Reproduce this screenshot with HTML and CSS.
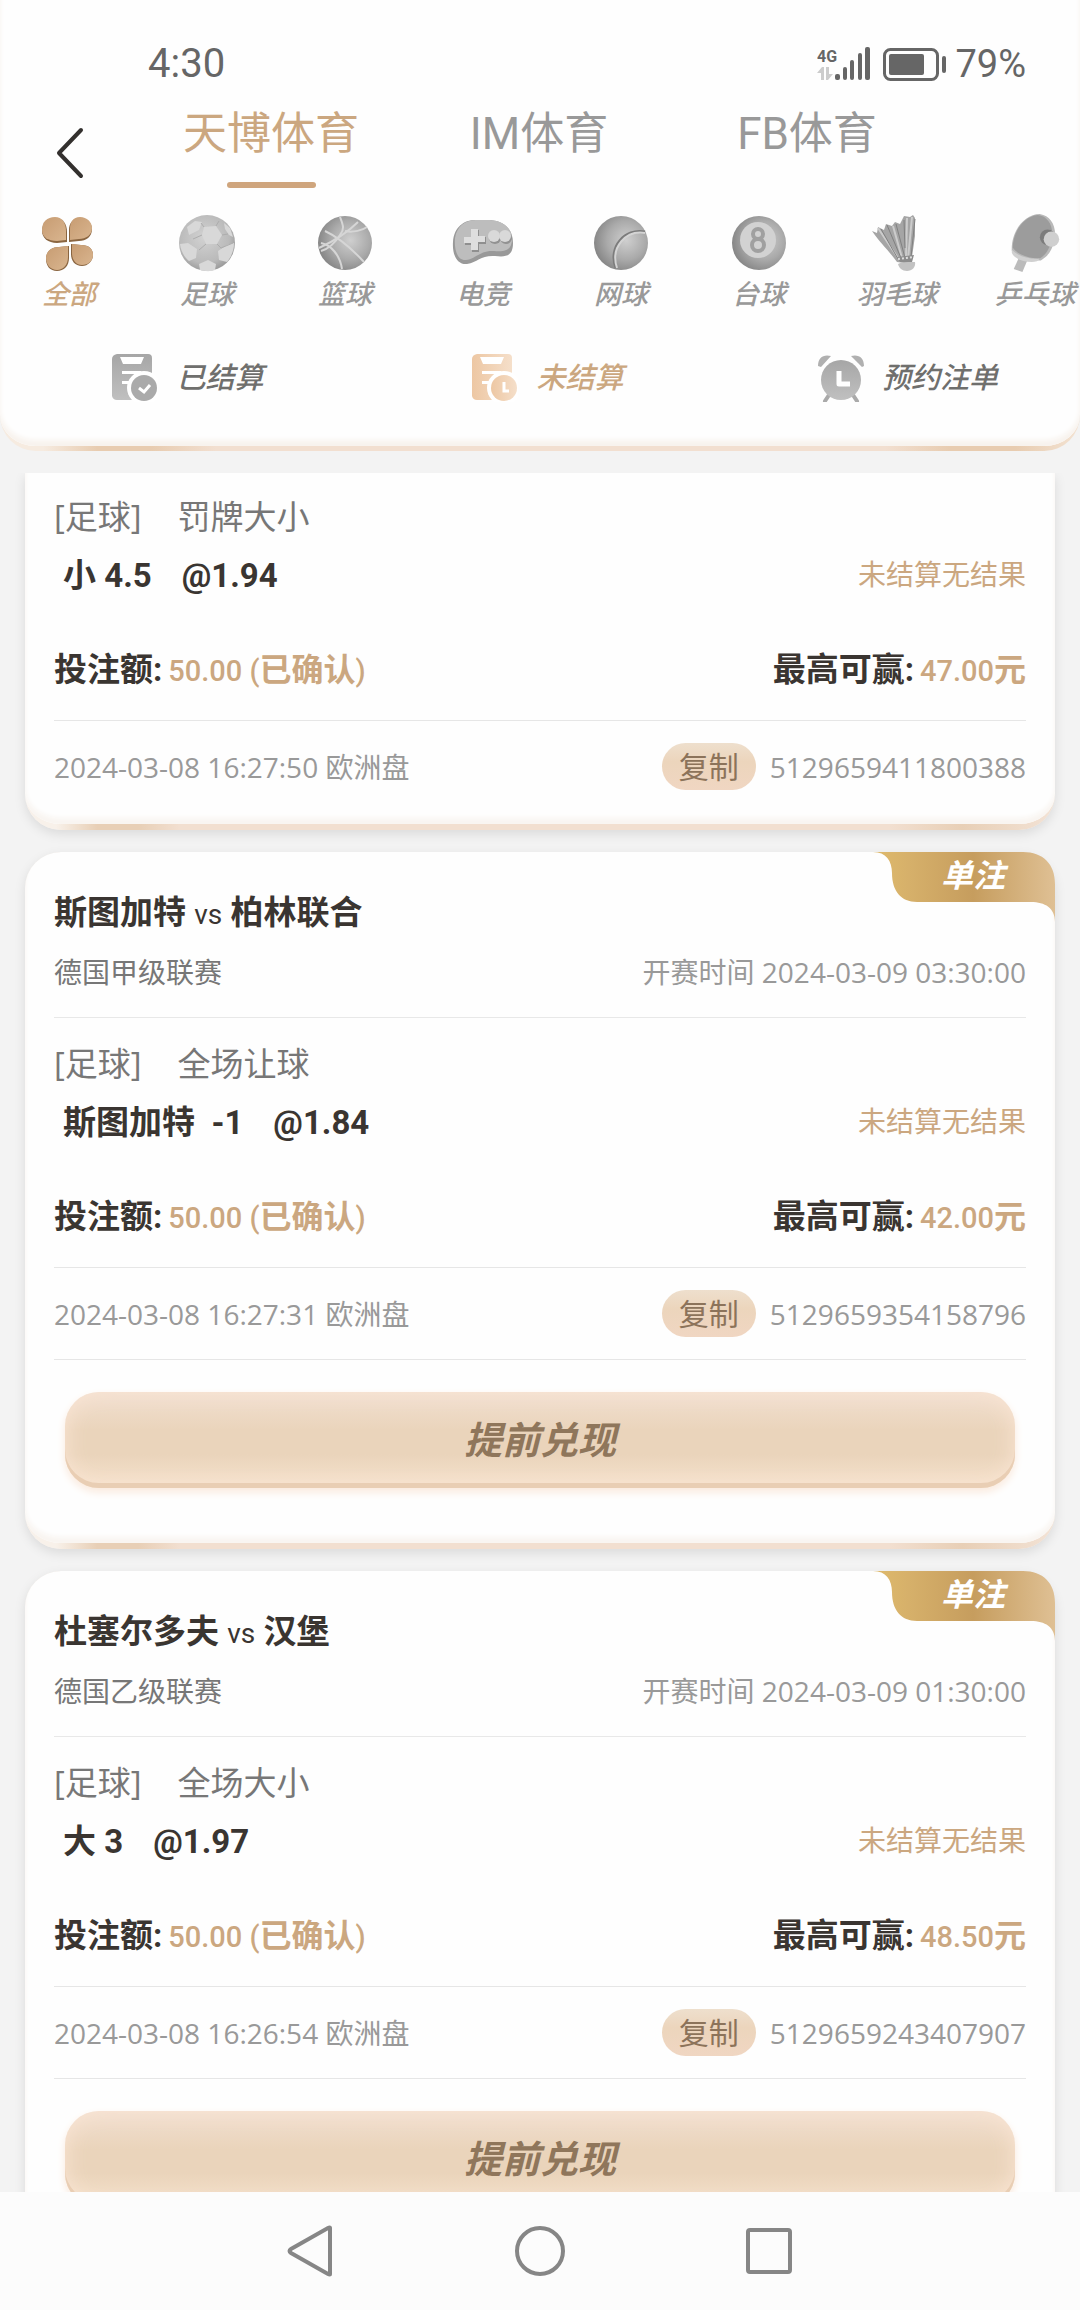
FILE: index.html
```html
<!DOCTYPE html>
<html lang="zh-CN">

<head>
    <meta charset="UTF-8">
    <meta name="viewport" content="width=device-width, initial-scale=1">
    <title>注单记录</title>
    <link rel="stylesheet" href="styles.css">
</head>

<body>
    <!-- shared gradients -->
    <svg class="defs" width="0" height="0" aria-hidden="true">
        <defs>
            <radialGradient id="ball" cx="0.6" cy="0.45" r="0.6">
                <stop offset="0" stop-color="#cfcfcf" />
                <stop offset="0.6" stop-color="#aaaaaa" />
                <stop offset="1" stop-color="#878787" />
            </radialGradient>
            <radialGradient id="ballLight" cx="0.45" cy="0.4" r="0.6">
                <stop offset="0" stop-color="#d2d2d2" />
                <stop offset="0.75" stop-color="#bababa" />
                <stop offset="1" stop-color="#9c9c9c" />
            </radialGradient>
            <linearGradient id="gold" x1="0" y1="0" x2="1" y2="1">
                <stop offset="0" stop-color="#c79c72" />
                <stop offset="1" stop-color="#d9b58f" />
            </linearGradient>
            <linearGradient id="goldLight" x1="0" y1="0" x2="1" y2="0">
                <stop offset="0" stop-color="#edc7a3" />
                <stop offset="1" stop-color="#f5dfca" />
            </linearGradient>
            <linearGradient id="silver" x1="0" y1="0" x2="0" y2="1">
                <stop offset="0" stop-color="#a6a6a6" />
                <stop offset="1" stop-color="#c0c0c0" />
            </linearGradient>
            <linearGradient id="badge" x1="0" y1="0" x2="1" y2="0">
                <stop offset="0" stop-color="#dfba6c" />
                <stop offset="0.2" stop-color="#d6b06a" />
                <stop offset="0.55" stop-color="#c69d5e" />
                <stop offset="1" stop-color="#dfc094" />
            </linearGradient>
        </defs>
    </svg>

    <header class="top-panel">
        <div class="status-bar">
            <span class="clock">4:30</span>
            <div class="status-right">
                <svg width="130" height="34" viewBox="0 0 130 34" aria-hidden="true">
                    <text class="net-type" x="0" y="15">4G</text>
                    <g fill="#cccccc">
                        <path d="M0 26L5 20h2v13H4v-7zM9 20h3v7h4l-5 6H9z" />
                    </g>
                    <g fill="#666666">
                        <rect x="18" y="27" width="5" height="6" rx="2" />
                        <rect x="26" y="20" width="4" height="13" rx="2" />
                        <rect x="33" y="13" width="4" height="20" rx="2" />
                        <rect x="41" y="6" width="4" height="27" rx="2" />
                        <rect x="48" y="0" width="5" height="33" rx="2" />
                        <rect x="72" y="7" width="35" height="21" rx="2" />
                        <rect x="125" y="9" width="4" height="17" rx="2" />
                    </g>
                    <rect x="67.500" y="2.500" width="53" height="30" rx="6" fill="none" stroke="#666666" stroke-width="3" />
                </svg>
                <span class="battery-level">79%</span>
            </div>
        </div>

        <div class="title-bar">
            <button class="back" type="button" aria-label="返回">
                <svg width="28" height="52" viewBox="0 0 28 52"><path d="M25 3L3 26l22 23" fill="none" stroke="#33302e" stroke-width="4" stroke-linecap="round" stroke-linejoin="round" /></svg>
            </button>
            <nav class="venue-tabs">
                <a href="#" class="active">天博体育</a>
                <a href="#">IM体育</a>
                <a href="#">FB体育</a>
            </nav>
        </div>

        <nav class="sports">
            <a href="#" class="active">
                <svg viewBox="0 0 62 58">
                    <g fill="#8a6540" transform="translate(0 1)">
                        <path d="M17 3c8 0 12 6 12 14v10l-10 1C10 28 4 23 4 16 4 8 9 3 17 3z" />
                        <path d="M42 3c7 0 12 5 12 11 0 8-6 12-13 12l-10 1V15C31 8 35 3 42 3z" />
                        <path d="M31 31v12c0 8-5 13-12 13S8 51 8 44c0-8 6-12 13-12z" />
                        <path d="M33 29l10 1c8 0 12 4 12 10s-5 11-11 11c-7 0-11-5-11-12z" />
                    </g>
                    <g fill="url(#gold)">
                        <path d="M17 3c7 0 11 6 11 14v9l-9 1C10 27 4 23 4 16 4 8 9 3 17 3z" />
                        <path d="M42 3c7 0 12 5 12 11 0 7-6 11-13 11l-9 1V15C32 8 35 3 42 3z" />
                        <path d="M30 32v11c0 8-5 13-11 13S8 51 8 44c0-7 6-11 13-11z" />
                        <path d="M34 30l9 1c8 0 12 4 12 10s-5 10-11 10-10-5-10-12z" />
                    </g>
                </svg>
                <span>全部</span>
            </a>
            <a href="#">
                <svg viewBox="0 0 62 58">
                    <circle cx="31" cy="29" r="28" fill="url(#ballLight)" />
                    <g fill="#d8d8d8">
                        <path d="M28 13l12-1 6 9-5 9H30l-4-9z" />
                        <path d="M11 13l8-6 7 1-3 8-10 5z" />
                        <path d="M4 30l8-1 9 6-1 9-7 3c-5-4-8-10-9-17z" />
                        <path d="M42 37l9-6 7-2c0 8-3 14-7 19l-8-2z" />
                        <path d="M23 50l9-4 8 4-1 6c-5 2-12 1-15 0z" />
                        <path d="M48 9l6 5 3 9-4-2-4-6z" />
                    </g>
                    <path d="M41 30l4 4 12-5M26 21l-9 4M46 21l6-1M30 30l-7 6M40 12l3-5M28 13l-3-4" fill="none" stroke="#adadad" />
                </svg>
                <span>足球</span>
            </a>
            <a href="#">
                <svg viewBox="0 0 62 58">
                    <circle cx="31" cy="29" r="27" fill="url(#ball)" />
                    <g fill="none" stroke="#d6d6d6" stroke-width="2">
                        <path d="M44 8C32 20 18 28 5 34" />
                        <path d="M11 17c13 6 28 19 39 31" />
                        <path d="M26 3c3 8 5 12 0 18-5 8-12 14-19 16" />
                        <path d="M7 29c10 2 19 12 21 26M31 17c8 2 18-1 22-4" />
                    </g>
                </svg>
                <span>篮球</span>
            </a>
            <a href="#">
                <svg viewBox="0 0 62 58">
                    <path d="M1 28C2 12 13 5 26 6h12c14 1 23 9 23 23 0 14-8 14-18 13-14-1-17 6-28 8C6 51 0 42 1 28z" fill="#999999" />
                    <path d="M3 24C5 11 15 5 26 6h12c13 1 22 8 22 19 0 12-8 13-18 12-14-1-18 8-28 9C5 47 2 35 3 24z" fill="#bdbdbd" />
                    <path d="M20 16h7v7h7v7h-7v8h-7v-7h-7v-7h7z" fill="#8f8f8f" />
                    <path d="M19 15h7v7h7v6h-7v8h-7v-7h-7v-6h7z" fill="#dedede" />
                    <circle cx="43" cy="24" r="6" fill="#929292" />
                    <circle cx="42" cy="22" r="6" fill="#d9d9d9" />
                    <circle cx="54" cy="24" r="6" fill="#929292" />
                    <circle cx="53" cy="22" r="6" fill="#d9d9d9" />
                </svg>
                <span>电竞</span>
            </a>
            <a href="#">
                <svg viewBox="0 0 62 58">
                    <circle cx="31" cy="29" r="27" fill="url(#ball)" />
                    <path d="M55 18C35 14 18 33 26 54" fill="none" stroke="#7c7c7c" stroke-width="3" />
                    <path d="M55 19C36 16 20 33 27 54" fill="none" stroke="#d4d4d4" stroke-width="2" />
                </svg>
                <span>网球</span>
            </a>
            <a href="#">
                <svg viewBox="0 0 62 58">
                    <circle cx="31" cy="29" r="27" fill="url(#ball)" />
                    <circle cx="30" cy="26" r="18" fill="#d2d2d2" />
                    <g fill="none" stroke="#a0a0a0" stroke-width="4">
                        <circle cx="30" cy="20" r="5" />
                        <circle cx="30" cy="31" r="6" />
                    </g>
                </svg>
                <span>台球</span>
            </a>
            <a href="#">
                <svg viewBox="0 0 62 58">
                    <path d="M6 17l5 2 1-6 6 3 2-6 6 2 3-4 5 2 4-8 6 1 3-2 2 3v18l-4 28-14-2C24 38 15 30 6 17z" fill="#a5a5a5" />
                    <path d="M12 14l20 30M27 12l9 32M41 4l-1 40M46 3l-4 42" fill="none" stroke="#cccccc" stroke-width="2" />
                    <path d="M15 15l17 30M21 11l14 33M30 10l9 34M38 6l1 28M49 5l-4 38" fill="none" stroke="#808080" stroke-width="1" />
                    <path d="M31 43l17-2-2 7H34z" fill="#8c8c8c" />
                    <path d="M32 45l16-2" stroke="#dddddd" stroke-dasharray="2 2" stroke-width="2" />
                    <path d="M32 50c4-2 11-2 17-2 1 5-3 9-8 9s-8-3-9-7z" fill="#c2c2c2" />
                </svg>
                <span>羽毛球</span>
            </a>
            <a href="#">
                <svg viewBox="0 0 62 60">
                    <path d="M14 46l9 2-5 12-9-3z" fill="#bbbbbb" />
                    <path d="M7 38C6 18 20 0 36 0c12 2 18 14 15 27-2 11-7 17-14 21-11 1-23-2-30-10z" fill="#b9b9b9" />
                    <path d="M8 35C8 18 20 2 34 1c11 1 17 13 14 25-2 11-6 16-12 20-10 0-22-3-28-11z" fill="#9c9c9c" />
                    <path d="M7 37c8 8 20 10 29 9l-3 3c-8 2-23-1-26-9z" fill="#d0d0d0" />
                    <circle cx="44" cy="24" r="8" fill="#7c7c7c" />
                    <circle cx="48" cy="26" r="8" fill="#cfcfcf" />
                </svg>
                <span>乒乓球</span>
            </a>
        </nav>

        <nav class="filters">
            <a href="#">
                <svg viewBox="0 0 46 48">
                    <path d="M5 0h31q4 0 4 4v40q0 2-4 2H5q-4 0-5-4V5q0-4 5-5z" fill="url(#silver)" />
                    <path d="M8 3h24l-3 7H11zM10 17h19v3H10zM10 27h9v3h-9z" fill="#fff" />
                    <circle cx="32" cy="34" r="17" fill="#fff" />
                    <circle cx="32" cy="34" r="13" fill="#aaaaaa" />
                    <path d="M27 34l5 4 6-7" fill="none" stroke="#fff" stroke-width="3" />
                </svg>
                <span>已结算</span>
            </a>
            <a href="#" class="active">
                <svg viewBox="0 0 46 48">
                    <path d="M5 0h31q4 0 4 4v40q0 2-4 2H5q-4 0-5-4V5q0-4 5-5z" fill="url(#goldLight)" />
                    <path d="M8 3h24l-3 7H11zM10 17h19v3H10zM10 27h9v3h-9z" fill="#fff" />
                    <circle cx="32" cy="34" r="17" fill="#fff" />
                    <circle cx="32" cy="34" r="13" fill="url(#goldLight)" />
                    <path d="M32 28v9h5" fill="none" stroke="#fff" stroke-width="3" />
                </svg>
                <span>未结算</span>
            </a>
            <a href="#">
                <svg viewBox="0 0 46 48">
                    <path d="M0 12C0 4 5 0 13 2L3 13zM46 12c0-8-5-12-13-10l11 11z" fill="#b0b0b0" />
                    <path d="M11 41l-4 6M35 41l4 6" stroke="#aaaaaa" stroke-width="4" stroke-linecap="round" />
                    <circle cx="23" cy="26" r="20" fill="url(#silver)" />
                    <path d="M21 17v13h11" fill="none" stroke="#fff" stroke-width="5" stroke-linejoin="round" />
                </svg>
                <span>预约注单</span>
            </a>
        </nav>
    </header>

    <main class="bet-list">
        <article class="card card-cut">
            <section class="bet">
                <p class="market"><span>[足球]</span><span>罚牌大小</span></p>
                <div class="row pick-row">
                    <p class="pick"><span>小 4.5</span><span>@1.94</span></p>
                    <span class="result">未结算无结果</span>
                </div>
                <div class="row money-row">
                    <p>投注额:<b>50.00 (<i>已确认</i>)</b></p>
                    <p>最高可赢:<b>47.00<i>元</i></b></p>
                </div>
            </section>
            <div class="row order-row">
                <time>2024-03-08 16:27:50 欧洲盘</time>
                <p class="order-no"><button class="copy" type="button">复制</button>5129659411800388</p>
            </div>
        </article>

        <article class="card">
            <div class="badge">
                <svg width="182" height="70" viewBox="0 0 182 70" aria-hidden="true"><path d="M0 0c13 0 19 9 19 21 0 18 9 29 25 29h114c14 0 24 6 24 20V32C182 12 170 0 150 0z" fill="url(#badge)" /></svg>
                <span>单注</span>
            </div>
            <div class="match">
                <h2>斯图加特 <small>vs</small> 柏林联合</h2>
                <div class="row league">
                    <span>德国甲级联赛</span>
                    <time>开赛时间 2024-03-09 03:30:00</time>
                </div>
            </div>
            <section class="bet">
                <p class="market"><span>[足球]</span><span>全场让球</span></p>
                <div class="row pick-row">
                    <p class="pick"><span>斯图加特&nbsp; -1</span><span>@1.84</span></p>
                    <span class="result">未结算无结果</span>
                </div>
                <div class="row money-row">
                    <p>投注额:<b>50.00 (<i>已确认</i>)</b></p>
                    <p>最高可赢:<b>42.00<i>元</i></b></p>
                </div>
            </section>
            <div class="row order-row">
                <time>2024-03-08 16:27:31 欧洲盘</time>
                <p class="order-no"><button class="copy" type="button">复制</button>5129659354158796</p>
            </div>
            <div class="card-foot">
                <button class="cash-out" type="button">提前兑现</button>
            </div>
        </article>

        <article class="card">
            <div class="badge">
                <svg width="182" height="70" viewBox="0 0 182 70" aria-hidden="true"><path d="M0 0c13 0 19 9 19 21 0 18 9 29 25 29h114c14 0 24 6 24 20V32C182 12 170 0 150 0z" fill="url(#badge)" /></svg>
                <span>单注</span>
            </div>
            <div class="match">
                <h2>杜塞尔多夫 <small>vs</small> 汉堡</h2>
                <div class="row league">
                    <span>德国乙级联赛</span>
                    <time>开赛时间 2024-03-09 01:30:00</time>
                </div>
            </div>
            <section class="bet">
                <p class="market"><span>[足球]</span><span>全场大小</span></p>
                <div class="row pick-row">
                    <p class="pick"><span>大 3</span><span>@1.97</span></p>
                    <span class="result">未结算无结果</span>
                </div>
                <div class="row money-row">
                    <p>投注额:<b>50.00 (<i>已确认</i>)</b></p>
                    <p>最高可赢:<b>48.50<i>元</i></b></p>
                </div>
            </section>
            <div class="row order-row">
                <time>2024-03-08 16:26:54 欧洲盘</time>
                <p class="order-no"><button class="copy" type="button">复制</button>5129659243407907</p>
            </div>
            <div class="card-foot">
                <button class="cash-out" type="button">提前兑现</button>
            </div>
        </article>
    </main>

    <footer class="system-nav">
        <button type="button" aria-label="后退">
            <svg width="52" height="52" viewBox="0 0 52 52"><path d="M45 3v46q0 1-2 0L6 28q-3-2 0-4L43 3q2-1 2 0z" /></svg>
        </button>
        <button type="button" aria-label="主页">
            <svg width="52" height="52" viewBox="0 0 52 52"><circle cx="26" cy="26" r="23" /></svg>
        </button>
        <button type="button" aria-label="最近任务">
            <svg width="52" height="52" viewBox="0 0 52 52"><rect x="5" y="5" width="42" height="42" rx="2" /></svg>
        </button>
    </footer>
</body>

</html>
```

FILE: styles.css
```css
* {
    box-sizing: border-box;
}

body {
    display: flex;
    flex-direction: column;
    height: 100vh;
    margin: 0;
    overflow: hidden;
    font-family: Roboto, "Noto Sans CJK SC", sans-serif;
    background-color: #f3f3f3;
    color: #3a3531;
}

h2,
p {
    margin: 0;
}

a {
    color: inherit;
    text-decoration: none;
}

button {
    padding: 0;
    border: none;
    background: none;
    font-family: inherit;
    cursor: pointer;
}

.defs {
    position: absolute;
}

/* header */
.top-panel {
    flex: none;
    margin-bottom: 22px;
    padding-bottom: 44px;
    overflow: hidden;
    border-bottom: 5px solid transparent;
    border-radius: 0 0 36px 36px;
    background:
        linear-gradient(#fefefe, #fefefe) padding-box,
        linear-gradient(90deg, #f6ebe0 4%, #e8ccb0 9%, #e8ccb0 14%, #f2dfd0 20%, #f2dfd0 82%, #e8ccb0 88%, #e8ccb0 94%, #f3e3d3) border-box;
    box-shadow: inset 0 -6px 5px #f8f3ee;
}

.status-bar {
    display: flex;
    justify-content: space-between;
    padding: 40px 54px 8px 148px;
    line-height: 48px;
    color: #666;
}

.clock {
    font-size: 40px;
}

.status-right {
    display: flex;
    align-items: center;
    gap: 8px;
    font-size: 38px;
}

.net-type {
    font-size: 16px;
    font-weight: 700;
    fill: #666;
}

.title-bar {
    display: flex;
}

.back {
    width: 137px;
    padding: 22px 0 0 2px;
}

.back svg {
    display: block;
    margin-left: 54px;
}

.venue-tabs {
    display: grid;
    grid-template-columns: repeat(3, 1fr);
    flex: 1;
    margin-right: 139px;
    font-size: 44px;
    line-height: 64px;
    text-align: center;
    color: #999;
}

.venue-tabs a {
    padding-top: 6px;
}

.venue-tabs .active {
    color: #cba780;
}

.venue-tabs .active::after {
    content: "";
    display: block;
    width: 89px;
    height: 6px;
    margin: 16px auto 0;
    border-radius: 3px;
    background-color: #cfa57d;
}

.sports {
    display: flex;
    margin-top: 26px;
    overflow: hidden;
}

.sports a {
    display: flex;
    flex: 0 0 138px;
    flex-direction: column;
    align-items: center;
    gap: 6px;
    font-size: 27px;
    font-style: italic;
    font-weight: 500;
    line-height: 34px;
    color: #999;
}

.sports svg {
    width: 62px;
    height: 58px;
}

.sports .active {
    color: #cba780;
}

.filters {
    display: grid;
    grid-template-columns: repeat(3, 1fr);
    margin-top: 42px;
    font-size: 29px;
    font-style: italic;
    font-weight: 500;
    line-height: 48px;
    color: #6f6f6d;
}

.filters a {
    display: flex;
    justify-content: center;
    gap: 18px;
    padding-left: 16px;
}

.filters svg {
    width: 46px;
    height: 48px;
}

.filters .active {
    color: #cba780;
}

/* bet cards */
.bet-list {
    flex: 1;
    min-height: 0;
    padding: 0 25px;
    overflow: hidden;
}

.card {
    position: relative;
    margin-bottom: 22px;
    padding: 39px 29px 0;
    border-bottom: 6px solid transparent;
    border-radius: 36px;
    background:
        linear-gradient(#fefefe, #fefefe) padding-box,
        linear-gradient(90deg, #f8f1ea 3%, #e8cfb6 7%, #e8cfb6 11%, #f2dfd0 15%, #f2dfd0 84%, #e8cfb6 91%, #f3e3d6) border-box;
    box-shadow: inset 0 -6px 5px #f9f5f1, 0 4px 12px rgba(0, 0, 0, 0.1);
}

.card-cut {
    padding-top: 0;
    padding-bottom: 12px;
    border-radius: 0 0 36px 36px;
}

.row {
    display: flex;
    align-items: center;
    justify-content: space-between;
}

.badge {
    position: absolute;
    top: 0;
    right: 0;
    width: 182px;
    height: 70px;
}

.badge svg {
    display: block;
}

.badge span {
    position: absolute;
    top: 0;
    right: 50px;
    font-size: 32px;
    font-style: italic;
    font-weight: 700;
    line-height: 48px;
    color: #fff;
}

.match {
    padding-bottom: 25px;
    border-bottom: 1px solid #e8e8e8;
}

.match h2 {
    font-size: 33px;
    font-weight: 700;
    line-height: 44px;
}

.match small {
    font-size: 28px;
    font-weight: 400;
    line-height: 1;
}

.league {
    height: 40px;
    margin-top: 17px;
    font-size: 28px;
    line-height: 40px;
    color: #777;
}

.league,
.order-row,
.market {
    font-family: "Open Sans", "Noto Sans CJK SC", sans-serif;
}

.league time {
    color: #999;
}

.bet {
    padding: 24px 0 28px;
    border-bottom: 1px solid #e6e6e6;
}

.card-cut .bet {
    padding-top: 22px;
}

.market {
    display: flex;
    gap: 36px;
    font-size: 33px;
    line-height: 44px;
    color: #777;
}

.pick-row {
    margin-top: 15px;
}

.pick {
    display: flex;
    gap: 30px;
    padding-left: 9px;
    font-size: 33px;
    font-weight: 700;
    line-height: 44px;
}

.result {
    font-size: 28px;
    line-height: 40px;
    color: #cba780;
}

.money-row {
    height: 44px;
    margin-top: 50px;
    font-size: 33px;
    font-weight: 700;
    line-height: 44px;
}

.money-row b {
    margin-left: 6px;
    font-size: 29px;
    font-weight: 500;
    line-height: 1;
    color: #cba780;
}

.money-row i {
    font-size: 32px;
    font-style: normal;
    font-weight: 700;
}

.order-row {
    height: 91px;
    font-size: 28px;
    line-height: 40px;
    color: #999;
}

.order-no {
    display: flex;
    align-items: center;
    gap: 14px;
}

.copy {
    width: 94px;
    height: 47px;
    border-radius: 24px;
    background: linear-gradient(#eedfcd, #ecd5bc 40%, #f0d6c2);
    font-size: 30px;
    line-height: 44px;
    color: #8c735a;
}

.card-foot {
    padding: 32px 11px 55px;
    border-top: 1px solid #e6e6e6;
}

.cash-out {
    display: block;
    width: 100%;
    height: 96px;
    padding-bottom: 6px;
    border-radius: 34px;
    background: linear-gradient(#f1dfd0, #ead4bb 40%, #ead4bb 65%, #f6e2cd);
    box-shadow: inset 0 -5px 0 #e9ceb4, inset 0 0 22px #fae5d4, 0 4px 8px #fae9dc;
    font-size: 38px;
    font-style: italic;
    font-weight: 700;
    color: #8f765b;
}

/* phone navigation */
.system-nav {
    display: flex;
    flex: none;
    align-items: center;
    justify-content: center;
    gap: 177px;
    height: 118px;
    background-color: #fcfcfc;
}

.system-nav svg {
    display: block;
    fill: none;
    stroke: #868686;
    stroke-width: 4;
}
```
